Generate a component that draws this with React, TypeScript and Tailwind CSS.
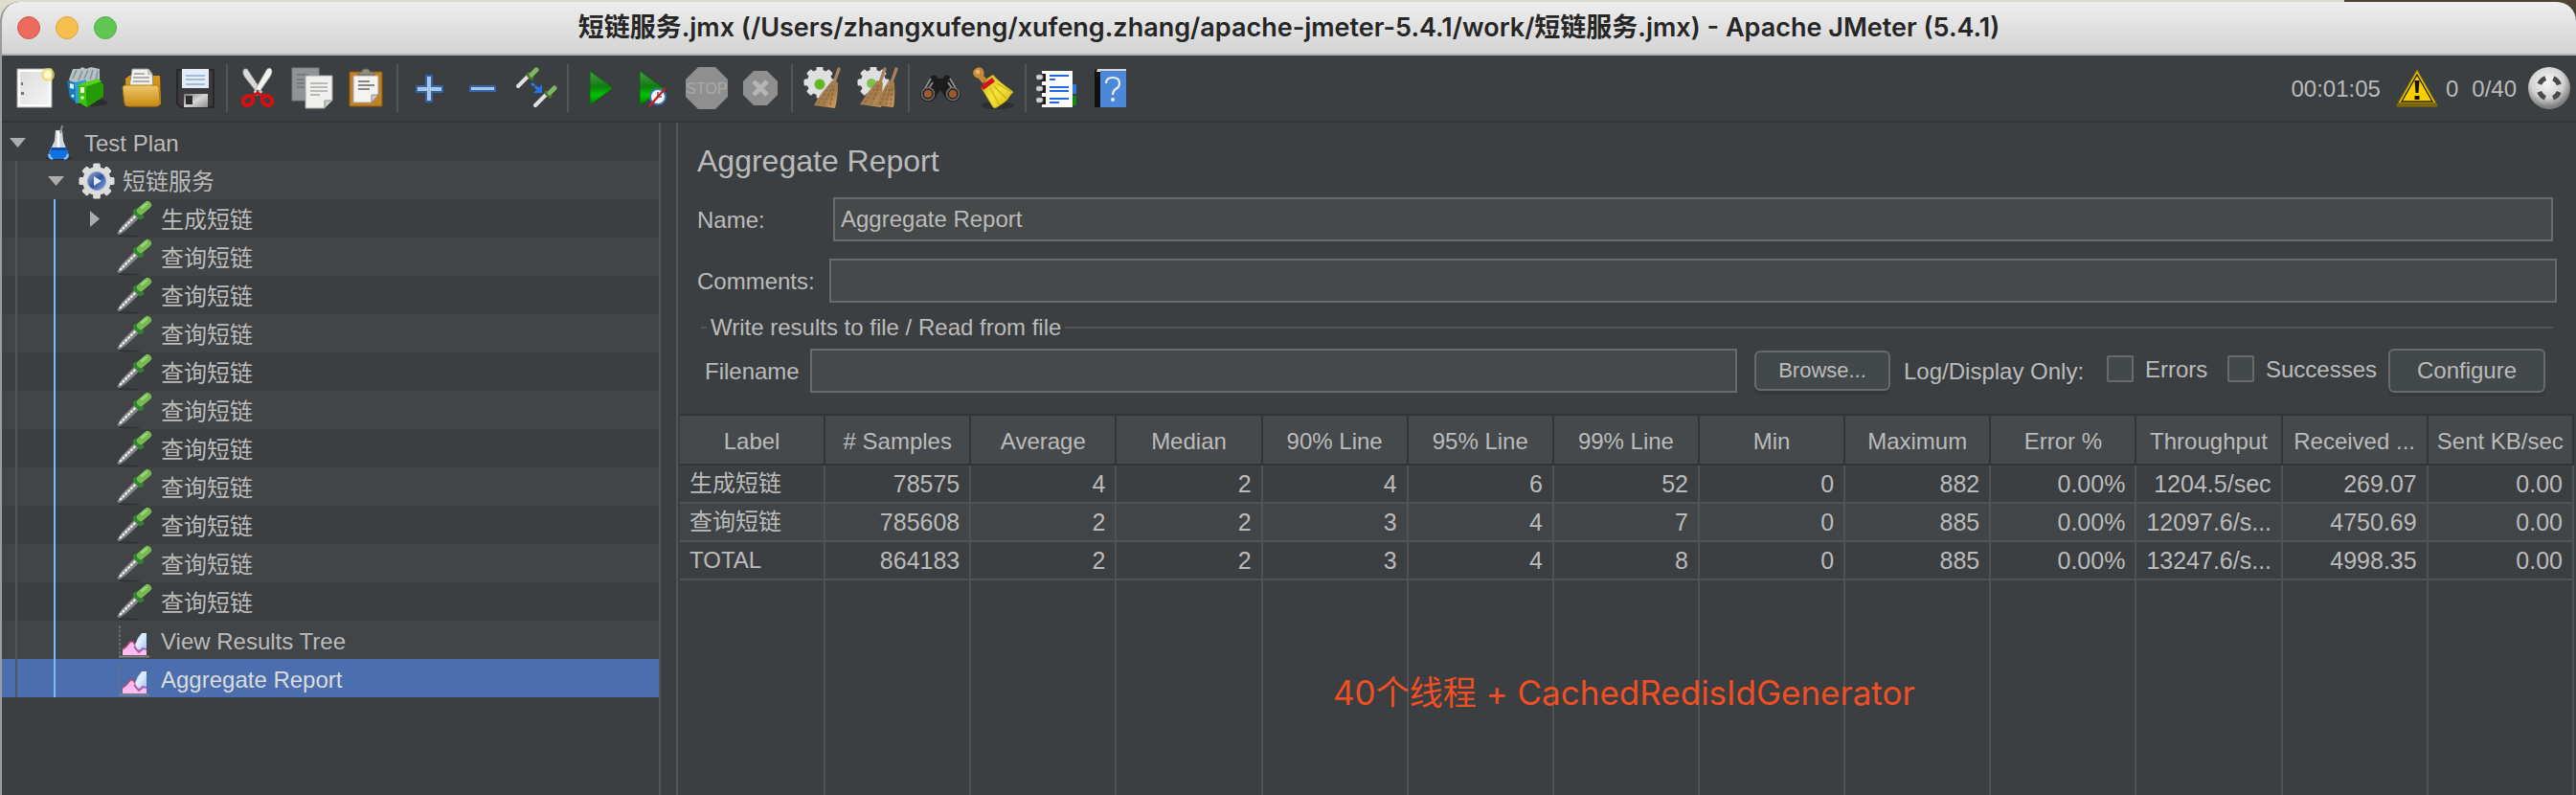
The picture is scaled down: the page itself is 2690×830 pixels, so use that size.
import type { ReactNode } from "react";

type Kids = { children?: ReactNode };

function Glyph({ children }: Kids) {
  return (
    <svg viewBox="0 0 44 44" className="size-11" aria-hidden="true">
      {children}
    </svg>
  );
}

function GearShape({ cx, cy, r, fill }: { cx: number; cy: number; r: number; fill: string }) {
  const w = r * 0.42;
  return (
    <g fill={fill}>
      {[0, 45, 90, 135].map((a) => (
        <rect
          key={a}
          x={cx - w / 2}
          y={cy - r}
          width={w}
          height={r * 2}
          rx={1.5}
          transform={`rotate(${a} ${cx} ${cy})`}
        />
      ))}
      <circle cx={cx} cy={cy} r={r * 0.8} />
    </g>
  );
}

function Defs() {
  return (
    <svg className="absolute size-0" aria-hidden="true">
      <defs>
        <linearGradient id="paper" x1="0" y1="0" x2="1" y2="1">
          <stop offset="0" stopColor="#dcdcdc" />
          <stop offset="1" stopColor="#f4f4f4" />
        </linearGradient>
        <linearGradient id="folder" x1="0" y1="0" x2="0" y2="1">
          <stop offset="0" stopColor="#edc76c" />
          <stop offset="1" stopColor="#c88a10" />
        </linearGradient>
        <linearGradient id="play" x1="0" y1="0" x2="0" y2="1">
          <stop offset="0" stopColor="#4f9a4f" />
          <stop offset="0.45" stopColor="#107c10" />
          <stop offset="0.7" stopColor="#00c400" />
          <stop offset="1" stopColor="#087008" />
        </linearGradient>
        <linearGradient id="straw" x1="0" y1="0" x2="1" y2="1">
          <stop offset="0" stopColor="#a98561" />
          <stop offset="0.6" stopColor="#a37c4c" />
          <stop offset="1" stopColor="#d9a260" />
        </linearGradient>
        <linearGradient id="yellowBroom" x1="0" y1="0" x2="1" y2="1">
          <stop offset="0" stopColor="#cdb41c" />
          <stop offset="0.5" stopColor="#f6e23c" />
          <stop offset="1" stopColor="#d3b80e" />
        </linearGradient>
        <radialGradient id="ball" cx="0.45" cy="0.35" r="0.6">
          <stop offset="0" stopColor="#f8f8f8" />
          <stop offset="0.65" stopColor="#d2d2d2" />
          <stop offset="1" stopColor="#808080" />
        </radialGradient>
        <linearGradient id="blueDisc" x1="0" y1="0" x2="1" y2="1">
          <stop offset="0" stopColor="#9fb0d0" />
          <stop offset="0.5" stopColor="#2f5299" />
          <stop offset="1" stopColor="#85aef0" />
        </linearGradient>
        <linearGradient id="sky" x1="0" y1="0" x2="1" y2="1">
          <stop offset="0" stopColor="#6fa4ec" />
          <stop offset="0.4" stopColor="#e8f1ff" />
          <stop offset="1" stopColor="#93bdf6" />
        </linearGradient>
        <linearGradient id="metal" x1="0" y1="0" x2="1" y2="1">
          <stop offset="0" stopColor="#777" />
          <stop offset="0.5" stopColor="#d8d8d8" />
          <stop offset="1" stopColor="#8c8c8c" />
        </linearGradient>
      </defs>
    </svg>
  );
}

const NewIcon = (
  <Glyph>
    <rect x="4" y="2" width="36" height="40" fill="#fff" stroke="#a9a9a4" strokeWidth="1" />
    <rect x="7" y="5" width="30" height="34" fill="url(#paper)" />
    <path d="M8 16h2v3h-2zM8 26h3v3h-3zM10 19h2M10 24h2" fill="#777" />
    <circle cx="36" cy="8" r="7" fill="#e9dc63" opacity="0.75" />
    <circle cx="36" cy="8" r="4" fill="#fffbd0" />
  </Glyph>
);

const TemplatesIcon = (
  <Glyph>
    <ellipse cx="26" cy="37" rx="16" ry="4" fill="#2b2d2e" />
    <path d="M2 13L6 2l7 0 3-2 4 2 5-2 9 2v16l-22 8z" fill="#b9bfc2" />
    <path d="M6 12l4-9M12 14l4-10M18 12l4-9M24 13l3-10M30 14l2-10" stroke="#7f949e" strokeWidth="1.6" />
    <path d="M0 14l8 2 1 20-6-4z" fill="#1679bd" />
    <path d="M8 16l12-3v24l-11 1z" fill="#2d9edb" />
    <path d="M3 17l4 1v5l-4-1z" fill="#d9effa" />
    <path d="M12 18l8-1 1 25-9-5z" fill="#3cc40b" />
    <path d="M20 18l12-5 6 5v13l-17 11z" fill="#259a02" />
    <path d="M12 18l20-6 4 3-15 5z" fill="#54d21e" />
    <rect x="14" y="21" width="4" height="6" fill="#e4f7da" />
    <circle cx="16" cy="32" r="1.8" fill="#e4f7da" />
    <circle cx="6" cy="30" r="1.5" fill="#d9effa" />
  </Glyph>
);

const OpenIcon = (
  <Glyph>
    <path d="M5 12l4-3h32l1 30H6z" fill="#d69412" />
    <path d="M12 2h17l4 5 1 14H9z" fill="#f0f0ee" stroke="#8d8d88" />
    <path d="M28 2l5 6h-5z" fill="#c4c4c0" />
    <path d="M14 7h11M13 11h17M13 15h17" stroke="#9b9b9b" strokeWidth="1.6" />
    <path d="M2 22q0-3 3-3h32q3 0 3 3l1 15q0 4-4 4H8q-4 0-4-4z" fill="url(#folder)" stroke="#b5790c" strokeWidth="1" />
  </Glyph>
);

const SaveIcon = (
  <Glyph>
    <path d="M3 3h38v39H7l-4-4z" fill="#3c3a3d" stroke="#232225" strokeWidth="1.5" />
    <rect x="8" y="2" width="28" height="20" fill="#e3edf5" />
    <path d="M12 9h20M12 13h20M12 18h20" stroke="#8cabcf" strokeWidth="1.5" />
    <path d="M10 28h25v14H10z" fill="url(#metal)" />
    <rect x="12" y="30" width="7" height="9" fill="#2c2c2c" />
  </Glyph>
);

const CutIcon = (
  <Glyph>
    <path d="M7 2Q4 6 8 11l15 19 3-4L10 2z" fill="#d9d9d9" stroke="#8f8f8f" strokeWidth="0.8" />
    <path d="M34 1q4 3 0 9L20 30l-3-4L31 2z" fill="#f1f1ef" stroke="#999" strokeWidth="0.8" />
    <circle cx="21" cy="25" r="1.5" fill="#555" />
    <ellipse cx="11" cy="35" rx="5.5" ry="4.5" transform="rotate(-38 11 35)" fill="none" stroke="#d60f12" strokeWidth="4.2" />
    <ellipse cx="31" cy="35" rx="5.5" ry="4.5" transform="rotate(38 31 35)" fill="none" stroke="#d60f12" strokeWidth="4.2" />
    <path d="M16 30l5-3 5 3" fill="none" stroke="#d60f12" strokeWidth="3" />
  </Glyph>
);

const CopyIcon = (
  <Glyph>
    <rect x="1" y="1" width="28" height="34" fill="#919496" stroke="#7b7e80" />
    <path d="M6 8h12M6 13h8M6 17h8M6 21h8" stroke="#707375" strokeWidth="1.6" />
    <path d="M15 9h28v26l-8 8H15z" fill="#f0f0ee" stroke="#a1a19c" />
    <path d="M35 43v-8h8z" fill="#cfcfca" stroke="#8b8b86" />
    <path d="M20 17h18M20 21h18M20 25h18M20 29h10" stroke="#a8a8a8" strokeWidth="1.6" />
  </Glyph>
);

const PasteIcon = (
  <Glyph>
    <rect x="5" y="5" width="34" height="36" rx="1" fill="#c08024" stroke="#8a5611" />
    <path d="M9 9h26v20l-7 8H9z" fill="#f3f3f1" stroke="#a3a39e" />
    <path d="M28 37v-8h7z" fill="#cdcdc8" stroke="#8b8b86" />
    <path d="M14 15h12M14 19h17M14 23h12" stroke="#868686" strokeWidth="1.8" />
    <path d="M14 8q0-3 4-3 0-3 4-3t4 3q5 0 5 3z" fill="#8d8d81" stroke="#6d6d63" />
  </Glyph>
);

const PlusIcon = (
  <Glyph>
    <path d="M19 9h6v11h11v6H25v10h-6V26H9v-6h10z" fill="#a9c6ea" stroke="#3264a6" strokeWidth="2" />
  </Glyph>
);

const MinusIcon = (
  <Glyph>
    <rect x="9" y="20" width="26" height="5" fill="#a9c6ea" stroke="#3264a6" strokeWidth="2" />
  </Glyph>
);

const ToggleIcon = (
  <Glyph>
    <path d="M3 20L14 9" stroke="#e1e1e1" strokeWidth="4" strokeLinecap="round" />
    <path d="M14 8l3 3" stroke="#46752d" strokeWidth="5" strokeLinecap="round" />
    <path d="M17 8l5-5" stroke="#7fb760" strokeWidth="5" strokeLinecap="round" />
    <path d="M21 40l11-11" stroke="#e1e1e1" strokeWidth="4" strokeLinecap="round" />
    <path d="M33 27l3 3" stroke="#46752d" strokeWidth="5" strokeLinecap="round" />
    <path d="M36 27l5-5" stroke="#7fb760" strokeWidth="5" strokeLinecap="round" />
    <path d="M17 17l7 6" stroke="#2f7de6" strokeWidth="2.6" strokeDasharray="4 1" />
    <path d="M28 18v9h-9z" fill="#1f74ee" />
  </Glyph>
);

const PlayIcon = (
  <Glyph>
    <path d="M12 4l24 18-24 18z" fill="url(#play)" stroke="#0a650a" strokeWidth="1" />
  </Glyph>
);

const PlayNoTimersIcon = (
  <Glyph>
    <path d="M8 4l26 19L8 40z" fill="url(#play)" stroke="#0a650a" strokeWidth="1" />
    <circle cx="27" cy="31" r="8" fill="#f4f4f4" stroke="#3d76bb" strokeWidth="2" />
    <path d="M27 26v5h4" stroke="#555" fill="none" strokeWidth="1.4" />
    <path d="M18 41l17-19" stroke="#cc1c22" strokeWidth="2.4" />
  </Glyph>
);

const StopIcon = (
  <Glyph>
    <path d="M13 0h18l13 13v18L31 44H13L0 31V13z" fill="#8f8f8f" />
    <text
      x="22"
      y="28"
      textAnchor="middle"
      fontSize="16"
      fontFamily="Liberation Sans, sans-serif"
      fill="#aaaaaa"
    >
      STOP
    </text>
  </Glyph>
);

const ShutdownIcon = (
  <Glyph>
    <path d="M15 4h14l11 11v14L29 40H15L4 29V15z" fill="#8f8f8f" />
    <path d="M15 15l14 14M29 15L15 29" stroke="#b5b5b5" strokeWidth="5" />
  </Glyph>
);

const ClearIcon = (
  <Glyph>
    <GearShape cx={18} cy={16} r={16.5} fill="#dfdfdf" />
    <circle cx="18" cy="18" r="5.5" fill="#5bb91e" stroke="#aacb91" />
    <path d="M38 2l-5 14" stroke="#a4825f" strokeWidth="3.4" strokeLinecap="round" />
    <path d="M31 14l6 2q0 16-3 27l-22-3q3-6 9-14z" fill="url(#straw)" />
    <path d="M16 38l14-20M22 39l10-20M29 40l4-20" stroke="#7d5a34" strokeWidth="1" strokeDasharray="3 2" />
  </Glyph>
);

const ClearAllIcon = (
  <Glyph>
    <GearShape cx={18} cy={16} r={16.5} fill="#dfdfdf" />
    <circle cx="16" cy="17" r="5" fill="#7ec04b" />
    <path d="M30 2l-5 14M42 2l-5 14" stroke="#a4825f" strokeWidth="3.4" strokeLinecap="round" />
    <path d="M22 14l6 2-2 26-22-3q8-13 18-25z" fill="url(#straw)" />
    <path d="M34 14l6 2q1 14-1 26l-19-2q6-13 14-26z" fill="url(#straw)" />
    <path d="M9 37l14-19M16 39l8-20M25 39l8-20M31 40l5-20M36 40l2-20" stroke="#7d5a34" strokeWidth="1" strokeDasharray="3 2" />
  </Glyph>
);

const SearchIcon = (
  <Glyph>
    <path d="M13 9q5-2 6 3h6q1-5 6-3l7 10 5 8q0 9-8 9-6 0-9-6l-4-6-4 6q-3 6-9 6-8 0-8-9l5-8z" fill="#1c1c1c" />
    <path d="M12 12l-6 10M32 12l6 10M14 16l-4 6M30 16l4 6" stroke="#8d8d8d" strokeWidth="2" />
    <circle cx="9" cy="28" r="6.5" fill="#2c2622" stroke="#6d6d6d" strokeWidth="1.5" />
    <circle cx="35" cy="28" r="6.5" fill="#2c2622" stroke="#6d6d6d" strokeWidth="1.5" />
    <circle cx="9" cy="28" r="4" fill="#a0592c" />
    <circle cx="35" cy="28" r="4" fill="#a0592c" />
  </Glyph>
);

const ResetSearchIcon = (
  <Glyph>
    <ellipse cx="26" cy="40" rx="17" ry="4" fill="#2d2f30" />
    <path d="M15 12l6-4q4 6 20 17 2 2-1 3-4 8-12 12-5 4-7 2L9 22z" fill="url(#yellowBroom)" stroke="#b09a10" strokeWidth="0.8" />
    <path d="M18 22l10 18M22 20l13 13M25 17l15 9" stroke="#c9ae12" strokeWidth="1.2" />
    <path d="M8 20l12-9 3 4-12 9z" fill="#d0141a" />
    <path d="M1 3q4-4 8-2 4 3 2 8l4 4-5 4-4-5Q0 10 0 6z" fill="#c58a36" />
    <circle cx="5" cy="5" r="2.2" fill="#e8bb70" />
  </Glyph>
);

const LogIcon = (
  <Glyph>
    <rect x="36" y="18" width="6" height="10" fill="#2a7be4" />
    <rect x="36" y="30" width="6" height="10" fill="#0c8a0c" />
    <rect x="6" y="4" width="32" height="38" fill="#fbfbfb" />
    <path d="M14 9h20M14 21h20M14 25h20M14 33h20" stroke="#1f6ae4" strokeWidth="2" />
    <path d="M14 13h6M14 37h10" stroke="#1f6ae4" strokeWidth="2" />
    {[7, 19, 31].map((y) => (
      <g key={y}>
        <rect x="4" y={y} width="6" height="8" fill="#1e1e1e" />
        <rect x="0" y={y + 1} width="7" height="5" rx="2" fill="#d4d4d4" stroke="#888" strokeWidth="0.7" />
      </g>
    ))}
  </Glyph>
);

const HelpIcon = (
  <Glyph>
    <path d="M5 3l3-1h30v40H5z" fill="#121212" />
    <path d="M8 2h30v3H7z" fill="#d7d7d7" />
    <rect x="11" y="4" width="27" height="38" fill="#4d88d8" />
    <path d="M17 17q0-6 7-6 7 0 7 6 0 4-4 6-3 2-3 6" fill="none" stroke="#e9f1fb" strokeWidth="2.2" />
    <circle cx="24" cy="34" r="2" fill="#e9f1fb" />
  </Glyph>
);

const WarningIcon = (
  <Glyph>
    <path d="M22 3l21 37q0 1-1 1H2q-1 0-1-1z" fill="#7a6405" stroke="#8a7208" />
    <path d="M22 4l19 33H3z" fill="#f5cf05" stroke="#b79a08" strokeWidth="1" />
    <path d="M22 8l16 28H6z" fill="#f8d000" stroke="#2b2603" strokeWidth="1.4" />
    <path d="M19.500 14h5l-1 13h-3z" fill="#161300" />
    <rect x="19.500" y="30" width="5" height="4" fill="#161300" />
  </Glyph>
);

const ThreadsIcon = (
  <Glyph>
    <circle cx="22" cy="22" r="22" fill="url(#ball)" />
    <circle cx="22" cy="22" r="11" fill="none" stroke="#4a4a4a" strokeWidth="5" strokeDasharray="9 8.28" strokeDashoffset="-4.1" />
  </Glyph>
);

function TreeGlyph({ children }: Kids) {
  return (
    <svg viewBox="0 0 40 40" className="size-10 shrink-0" aria-hidden="true">
      {children}
    </svg>
  );
}

const FlaskIcon = (
  <TreeGlyph>
    <ellipse cx="21" cy="37" rx="14" ry="2" fill="#2b2d2e" />
    <path d="M18 8h7l1 11 6 15q0 4-4 4H14q-4 0-4-4l7-15z" fill="#cfd5de" />
    <path d="M21 9v24" stroke="#fff" strokeWidth="2.5" />
    <path d="M14 26h15l3 8q0 4-4 4H14q-4 0-4-4z" fill="#1272e0" />
    <path d="M14 26h15l1 3H13z" fill="#0d4fae" />
    <path d="M25 3l-2 8" stroke="#85898c" strokeWidth="2" />
    <path d="M11 33q1 4 4 5M31 33q-1 4-4 5" stroke="#8fc4ff" strokeWidth="2" fill="none" />
  </TreeGlyph>
);

const ThreadGroupIcon = (
  <TreeGlyph>
    <GearShape cx={21} cy={21} r={18.5} fill="#dcdcdc" />
    <circle cx="21" cy="21" r="9.5" fill="url(#blueDisc)" stroke="#8a9cc0" />
    <path d="M18 16l8 5-8 5z" fill="#e3ebf7" />
  </TreeGlyph>
);

const SamplerIcon = (
  <TreeGlyph>
    <ellipse cx="15" cy="38.500" rx="11" ry="1" fill="#303334" />
    <path d="M2 36l5-8L21 14l5 5L12 32l-7 5z" fill="#858585" />
    <path d="M5 34L22 17" stroke="#f0f0f0" strokeWidth="2.4" strokeDasharray="3 1" />
    <path d="M22 13l5 5" stroke="#33842f" strokeWidth="6" strokeLinecap="round" />
    <path d="M27 12l7-6" stroke="#78bb53" strokeWidth="8" strokeLinecap="round" />
    <path d="M28 9l5-4" stroke="#a7d988" strokeWidth="2" strokeLinecap="round" />
  </TreeGlyph>
);

const ListenerIcon = (
  <TreeGlyph>
    <path d="M5 5v33" stroke="#6e7274" strokeWidth="1.6" strokeDasharray="3 1.5" />
    <path d="M4 37.500h32" stroke="#7d8082" strokeWidth="2" />
    <path d="M8 36v-6l4-3 4-5h3l4 8 4 2 6-3v7z" fill="#fbbdf0" />
    <path d="M8 30l4-3 4-5h3l4 6" fill="none" stroke="#b8476f" strokeWidth="1.6" />
    <path d="M21 25l3-7 4-5h5v16l-4 3-6-2z" fill="url(#sky)" />
    <path d="M20 27l5 6 4-4 4 1" fill="none" stroke="#b04fa8" strokeWidth="1.8" />
  </TreeGlyph>
);

type Node = { label: string; level: number; icon: ReactNode; open?: boolean };

const nodes: Node[] = [
  { label: "Test Plan", level: 0, icon: FlaskIcon, open: true },
  { label: "短链服务", level: 1, icon: ThreadGroupIcon, open: true },
  { label: "生成短链", level: 2, icon: SamplerIcon, open: false },
  ...Array.from({ length: 10 }, () => ({ label: "查询短链", level: 2, icon: SamplerIcon })),
  { label: "View Results Tree", level: 2, icon: ListenerIcon },
  { label: "Aggregate Report", level: 2, icon: ListenerIcon },
];

function Arrow({ open }: { open?: boolean }) {
  return (
    <svg viewBox="0 0 20 20" className="mr-3 size-5 shrink-0" aria-hidden="true">
      {open === true && <path d="M2 6h17l-8.500 10z" fill="#adadad" />}
      {open === false && <path d="M6 2v17l10-8.500z" fill="#adadad" />}
    </svg>
  );
}

function Tree() {
  return (
    <ul role="tree" className="w-[688px] shrink-0 border-r-2 border-[#555555]">
      {nodes.map((n, i) => {
        const selected = i === nodes.length - 1;
        const bg = selected ? "bg-[#4b6eaf] text-[#dcdcdc]" : i % 2 ? "bg-[#414547]" : "";
        return (
          <li key={i} role="treeitem" aria-selected={selected} className={`flex h-10 items-center pl-1.5 ${bg}`}>
            {Array.from({ length: n.level }, (_, l) => (
              <span key={l} className="flex h-full w-10 shrink-0 pl-2">
                <span className={`w-0.5 ${l === 1 ? "bg-[#78bdf8]" : "bg-[#555555]"}`} />
              </span>
            ))}
            <Arrow open={n.open} />
            {n.icon}
            <span className="ml-2 pt-1">{n.label}</span>
          </li>
        );
      })}
    </ul>
  );
}

const groups: { name: string; icon: ReactNode; off?: boolean }[][] = [
  [
    { name: "New", icon: NewIcon },
    { name: "Templates", icon: TemplatesIcon },
    { name: "Open", icon: OpenIcon },
    { name: "Save", icon: SaveIcon },
  ],
  [
    { name: "Cut", icon: CutIcon },
    { name: "Copy", icon: CopyIcon },
    { name: "Paste", icon: PasteIcon },
  ],
  [
    { name: "Expand All", icon: PlusIcon },
    { name: "Collapse All", icon: MinusIcon },
    { name: "Toggle", icon: ToggleIcon },
  ],
  [
    { name: "Start", icon: PlayIcon },
    { name: "Start no pauses", icon: PlayNoTimersIcon },
    { name: "Stop", icon: StopIcon, off: true },
    { name: "Shutdown", icon: ShutdownIcon, off: true },
  ],
  [
    { name: "Clear", icon: ClearIcon },
    { name: "Clear All", icon: ClearAllIcon },
  ],
  [
    { name: "Search", icon: SearchIcon },
    { name: "Reset Search", icon: ResetSearchIcon },
  ],
  [
    { name: "Function Helper", icon: LogIcon },
    { name: "Help", icon: HelpIcon },
  ],
];

function Toolbar() {
  return (
    <div className="flex h-[70px] items-center border-b-2 border-[#323537] pr-1.5 pl-1.5">
      {groups.map((g, i) => (
        <div key={i} className="flex items-center">
          {i > 0 && <span className="mx-1 h-[50px] w-0.5 bg-[#555555]" />}
          {g.map((b) => (
            <button key={b.name} aria-label={b.name} disabled={b.off} className="flex size-14 items-center justify-center">
              {b.icon}
            </button>
          ))}
        </div>
      ))}
      <div className="ml-auto flex items-center">
        <span className="mr-4 pt-0.5">00:01:05</span>
        {WarningIcon}
        <span className="ml-2 pt-0.5">0</span>
        <span className="mr-3 ml-3.5 pt-0.5">0/40</span>
        {ThreadsIcon}
      </div>
    </div>
  );
}

const field =
  "h-[46px] min-w-0 grow border-2 border-[#6a6a6a] bg-[#45494a] px-1.5 text-[#bbbbbb] outline-none";
const box = "size-7 appearance-none rounded-xs border-2 border-[#6a6a6a] bg-[#43494a]";
const button =
  "rounded-md border-2 border-[#6a6a6a] bg-[#43494a] shadow-[0_4px_0_#353839]";

const columns = [
  "Label",
  "# Samples",
  "Average",
  "Median",
  "90% Line",
  "95% Line",
  "99% Line",
  "Min",
  "Maximum",
  "Error %",
  "Throughput",
  "Received ...",
  "Sent KB/sec",
];

const rows = [
  ["生成短链", "78575", "4", "2", "4", "6", "52", "0", "882", "0.00%", "1204.5/sec", "269.07", "0.00"],
  ["查询短链", "785608", "2", "2", "3", "4", "7", "0", "885", "0.00%", "12097.6/s...", "4750.69", "0.00"],
  ["TOTAL", "864183", "2", "2", "3", "4", "8", "0", "885", "0.00%", "13247.6/s...", "4998.35", "0.00"],
];

function ResultsTable() {
  return (
    <div className="relative grid grow px-0.5">
      <table className="h-full w-full table-fixed border-separate border-spacing-0">
        <thead>
          <tr className="h-[54px] bg-[#45494b]">
            {columns.map((c) => (
              <th key={c} className="border-y-2 border-r-2 border-[#323537] p-0 pt-1 font-normal whitespace-nowrap">
                {c}
              </th>
            ))}
          </tr>
        </thead>
        <tbody>
          {rows.map((r, i) => (
            <tr key={r[0]} className={`h-10 ${i % 2 ? "bg-[#414547]" : ""}`}>
              {r.map((v, j) => (
                <td
                  key={j}
                  className={`border-r-2 border-b-2 border-[#505354] px-2.5 py-0 whitespace-nowrap ${
                    j === 0 ? "text-left" : "text-right text-[25px]"
                  }`}
                >
                  {v}
                </td>
              ))}
            </tr>
          ))}
          <tr>
            {columns.map((c) => (
              <td key={c} className="border-r-2 border-[#505354] p-0" />
            ))}
          </tr>
        </tbody>
      </table>
      <p className="absolute top-[266px] left-[684px] font-['Inter','Noto_Sans_CJK_SC',sans-serif] text-[35px] leading-[50px] whitespace-nowrap text-[#f04e23]">
        40个线程 + CachedRedisIdGenerator
      </p>
    </div>
  );
}

function Report() {
  return (
    <main className="ml-4 flex min-w-0 grow flex-col border-l-2 border-[#555555]">
      <div className="pr-5 pl-5">
        <h1 className="pt-[18px] text-[32px] leading-[44px]">Aggregate Report</h1>
        <div className="mt-4 flex items-center pr-1">
          <label htmlFor="name" className="w-[142px] shrink-0 pt-0.5">
            Name:
          </label>
          <input id="name" className={field} defaultValue="Aggregate Report" />
        </div>
        <div className="mt-[18px] flex items-center">
          <label htmlFor="comments" className="w-[138px] shrink-0 pt-0.5">
            Comments:
          </label>
          <input id="comments" className={field} />
        </div>
      </div>
      <fieldset className="mx-6 min-w-0">
        <legend className="flex w-full items-center pt-3">
          <span className="mr-1 h-0.5 w-1.5 bg-[#555555]" />
          <span className="leading-7">Write results to file / Read from file</span>
          <span className="ml-1 h-0.5 grow bg-[#555555]" />
        </legend>
        <div className="flex items-center pt-2 pr-2 pl-1">
          <label htmlFor="filename" className="w-[110px] shrink-0 pt-0.5">
            Filename
          </label>
          <input id="filename" className={field} />
          <button className={`${button} ml-[18px] h-[42px] w-[142px] text-[22px]`}>Browse...</button>
          <span className="ml-3.5 w-[212px] pt-0.5">Log/Display Only:</span>
          <div className="flex items-center pb-1">
            <input id="errors" type="checkbox" className={box} />
            <label htmlFor="errors" className="w-[98px] pt-0.5 pl-3">
              Errors
            </label>
            <input id="successes" type="checkbox" className={box} />
            <label htmlFor="successes" className="w-[140px] pt-0.5 pl-3">
              Successes
            </label>
          </div>
          <button className={`${button} h-[46px] w-[164px]`}>Configure</button>
        </div>
      </fieldset>
      <div className="flex grow flex-col pt-[22px]">
        <ResultsTable />
      </div>
    </main>
  );
}

export default function App() {
  return (
    <div className="flex min-h-screen flex-col bg-[linear-gradient(90deg,#dedccf_91%,#4d4534_91%)] pt-0.5 font-['Liberation_Sans','Noto_Sans_CJK_SC',sans-serif] text-[24px] leading-8 text-[#bbbbbb]">
      <Defs />
      <div className="flex grow flex-col overflow-hidden rounded-t-[20px] border-l-2 border-[#9b9d9c] bg-[#3c3f41]">
        <header className="flex h-14 items-center border-b-2 border-[#b0b0b0] bg-linear-to-b from-[#eeeeee] to-[#d3d3d3]">
          <div className="flex w-[120px] gap-4 pl-4">
            <button aria-label="Close" className="size-6 rounded-full border border-[#d55549] bg-[#ed6a5e]" />
            <button aria-label="Minimize" className="size-6 rounded-full border border-[#dba63c] bg-[#f5bf4f]" />
            <button aria-label="Zoom" className="size-6 rounded-full border border-[#52ae45] bg-[#61c554]" />
          </div>
          <h2 className="grow pr-[120px] text-center font-['Inter','Noto_Sans_CJK_SC',sans-serif] text-[27px] font-semibold text-[#262626]">
            短链服务.jmx (/Users/zhangxufeng/xufeng.zhang/apache-jmeter-5.4.1/work/短链服务.jmx) - Apache JMeter (5.4.1)
          </h2>
        </header>
        <Toolbar />
        <div className="flex grow">
          <Tree />
          <Report />
        </div>
      </div>
    </div>
  );
}
